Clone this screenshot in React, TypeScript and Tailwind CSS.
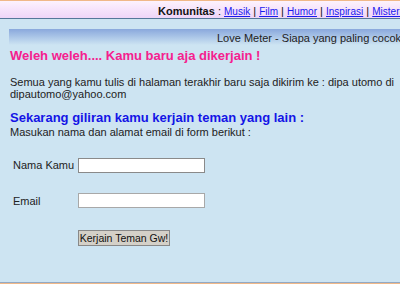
import React from "react";

export default function App() {
  const link = "text-[#1a1aee] underline text-[10px]";
  return (
    <div className="w-[400px] h-[284px] overflow-hidden bg-[#cde4f2] flex flex-col" style={{ fontFamily: '"Liberation Sans", Arial, sans-serif' }}>
      <div className="h-[1px] bg-[#f0b888] shrink-0" />
      <div className="h-[18px] shrink-0 bg-gradient-to-b from-[#fdf2fd] to-[#efd5f8] border-b border-[#56789a] pl-[158px] pt-[1px] whitespace-nowrap overflow-hidden text-[11px] leading-[19px] text-[#111]">
        <b>Komunitas</b> : <span className={link}>Musik</span> | <span className={link}>Film</span> | <span className={link}>Humor</span> | <span className={link}>Inspirasi</span> | <span className={link}>Misteri</span>
      </div>
      <div className="flex-1 flex flex-col">
        <div className="ml-[9px] mt-[10px] h-[16px] bg-gradient-to-b from-[#8aa8dc] to-[#cde4f2] pl-[208px] whitespace-nowrap overflow-hidden text-[11px] leading-[18px] text-[#222]">
          Love Meter - Siapa yang paling cocok buat kamu
        </div>
        <div className="px-[10px]">
          <div className="mt-[3px] text-[13px] font-bold leading-[16px] text-[#f5208e]">Weleh weleh.... Kamu baru aja dikerjain !</div>
          <div className="mt-[12px] text-[11px] leading-[12px] text-[#222] w-[385px]">
            Semua yang kamu tulis di halaman terakhir baru saja dikirim ke : dipa utomo di dipautomo@yahoo.com
          </div>
          <div className="mt-[10px] text-[13px] font-bold leading-[16px] text-[#1414e6]">Sekarang giliran kamu kerjain teman yang lain :</div>
          <div className="text-[11px] leading-[12px] text-[#222]">Masukan nama dan alamat email di form berikut :</div>
          <div className="mt-[19px] flex items-center">
            <span className="w-[68px] pl-[3px] text-[11px] text-[#222]">Nama Kamu</span>
            <div className="w-[127px] h-[15px] bg-white border border-[#8a8a8a]" />
          </div>
          <div className="mt-[19px] flex items-center">
            <span className="w-[68px] pl-[3px] text-[11px] text-[#222]">Email</span>
            <div className="w-[127px] h-[15px] bg-white border border-[#a8a8a8]" />
          </div>
          <div className="mt-[21px] pl-[68px]">
            <div className="w-[92px] h-[16px] bg-[#d4d0c8] border border-[#888] text-[10.5px] leading-[14px] text-center text-[#111] whitespace-nowrap">Kerjain Teman Gw!</div>
          </div>
        </div>
      </div>
      <div className="h-[1px] bg-[#93a9c3] shrink-0" />
      <div className="h-[1px] bg-[#f0b888] shrink-0" />
    </div>
  );
}
